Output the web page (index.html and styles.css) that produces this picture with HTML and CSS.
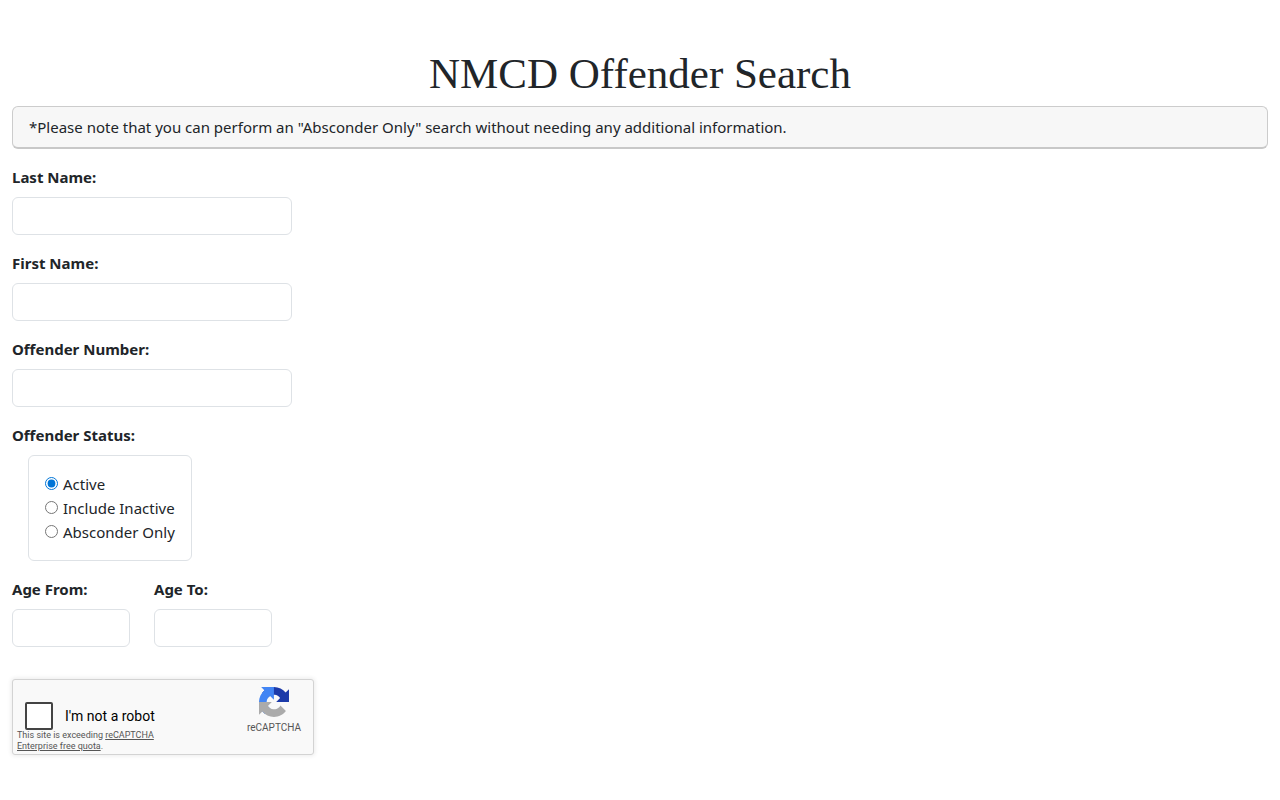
FILE: index.html
```html
<!DOCTYPE html>
<html lang="en">
<head>
    <meta charset="UTF-8">
    <meta name="viewport" content="width=device-width, initial-scale=1.0">
    <title>NMCD Offender Search</title>
    <link rel="stylesheet" href="styles.css">
</head>
<body>
    <main class="container">
        <h1>NMCD Offender Search</h1>
        <div class="note">*Please note that you can perform an "Absconder Only" search without needing any additional information.</div>
        <form>
            <div class="field">
                <label class="title" for="lastName">Last Name:</label>
                <input class="text" type="text" id="lastName" name="lastName">
            </div>
            <div class="field">
                <label class="title" for="firstName">First Name:</label>
                <input class="text" type="text" id="firstName" name="firstName">
            </div>
            <div class="field">
                <label class="title" for="offenderNumber">Offender Number:</label>
                <input class="text" type="text" id="offenderNumber" name="offenderNumber">
            </div>
            <div class="field" role="radiogroup" aria-labelledby="statusTitle">
                <span class="title" id="statusTitle">Offender Status:</span>
                <div class="status">
                    <label><input type="radio" name="status" value="active" checked>Active</label>
                    <label><input type="radio" name="status" value="inactive">Include Inactive</label>
                    <label><input type="radio" name="status" value="absconder">Absconder Only</label>
                </div>
            </div>
            <div class="ages">
                <div class="field">
                    <label class="title" for="ageFrom">Age From:</label>
                    <input class="text age" type="text" id="ageFrom" name="ageFrom">
                </div>
                <div class="field">
                    <label class="title" for="ageTo">Age To:</label>
                    <input class="text age" type="text" id="ageTo" name="ageTo">
                </div>
            </div>
            <div class="captcha">
                <div class="captcha-main">
                    <label class="robot"><input type="checkbox" name="robot">I'm not a robot</label>
                    <p class="quota">This site is exceeding <a href="#">reCAPTCHA Enterprise free quota</a>.</p>
                </div>
                <div class="captcha-brand">
                    <svg width="30" height="30" viewBox="0 0 64 64" aria-hidden="true">
                        <path fill="#1c3aa9" d="M64 31.955l-.033-1.37V4.687l-7.16 7.16C50.948 4.674 42.033.093 32.05.093c-10.4 0-19.622 4.96-25.458 12.64l11.736 11.86a15.55 15.55 0 0 1 4.754-5.334c2.05-1.6 4.952-2.906 8.968-2.906.485 0 .86.057 1.135.163 4.976.393 9.288 3.14 11.828 7.124l-8.307 8.307L64 31.953"/>
                        <path fill="#4285f4" d="M31.862.094l-1.37.033H4.594l7.16 7.16C4.58 13.147 0 22.06 0 32.046c0 10.4 4.96 19.622 12.64 25.458L24.5 45.768a15.55 15.55 0 0 1-5.334-4.754c-1.6-2.05-2.906-4.952-2.906-8.968 0-.485.057-.86.163-1.135.393-4.976 3.14-9.288 7.124-11.828l8.307 8.307L31.86.095"/>
                        <path fill="#ababab" d="M.001 32.045l.033 1.37v25.898l7.16-7.16c5.86 7.173 14.774 11.754 24.76 11.754 10.4 0 19.622-4.96 25.458-12.64l-11.736-11.86a15.55 15.55 0 0 1-4.754 5.334c-2.05 1.6-4.952 2.906-8.968 2.906-.485 0-.86-.057-1.135-.163-4.976-.393-9.288-3.14-11.828-7.124l8.307-8.307c-10.522.04-22.4.066-27.295-.005"/>
                    </svg>
                    <span>reCAPTCHA</span>
                </div>
            </div>
        </form>
    </main>
</body>
</html>
```
FILE: styles.css
```css
* {
    box-sizing: border-box;
}
body {
    margin: 0;
    font-family: "Segoe UI", "Noto Sans", sans-serif;
    font-size: 15px;
    line-height: 24px;
    color: #212529;
    background-color: #fff;
}
.container {
    padding: 50px 12px 24px;
}
h1 {
    margin: 0 0 8px;
    font-family: Georgia, "Liberation Serif", serif;
    font-size: 43px;
    font-weight: normal;
    line-height: 48px;
    text-align: center;
}
.note {
    margin-bottom: 16px;
    padding: 8px 16px;
    border: 1px solid #ccc;
    border-bottom: 2px solid #c8c8c8;
    border-radius: 6px;
    background-color: #f7f7f7;
}
.field {
    margin-bottom: 16px;
}
.title {
    display: block;
    margin-bottom: 8px;
    font-weight: bold;
}
.text {
    display: block;
    width: 280px;
    height: 38px;
    padding: 6px 12px;
    border: 1px solid #dee2e6;
    border-radius: 6px;
    font: inherit;
    color: inherit;
}
.age {
    width: 118px;
}
.ages {
    display: flex;
    gap: 24px;
}
.status {
    display: flex;
    flex-direction: column;
    width: 164px;
    margin-left: 16px;
    padding: 16px;
    border: 1px solid #dee2e6;
    border-radius: 6px;
    white-space: nowrap;
}
.status label {
    display: flex;
    align-items: center;
    gap: 5px;
}
.status input {
    width: 13px;
    height: 13px;
    margin: 0 0 2px;
    accent-color: #0075d7;
}
.captcha {
    display: flex;
    justify-content: space-between;
    width: 302px;
    height: 76px;
    margin-top: 16px;
    border: 1px solid #d3d3d3;
    border-radius: 3px;
    background-color: #f9f9f9;
    box-shadow: 0 0 4px 1px rgba(0,0,0,0.08);
    font-family: Roboto, sans-serif;
}
.captcha-main {
    width: 160px;
    padding: 22px 0 0 4px;
}
.robot {
    display: flex;
    align-items: center;
    gap: 12px;
    padding-left: 8px;
    font-size: 14px;
    line-height: 17px;
    color: #000;
}
.robot input {
    appearance: none;
    width: 28px;
    height: 28px;
    margin: 0;
    border: 2px solid #444;
    border-radius: 2px;
    background-color: #fff;
}
.robot input:checked {
    background-color: #4285f4;
}
.quota {
    margin: 0;
    font-size: 9px;
    line-height: 11px;
    color: #555;
}
.quota a {
    color: inherit;
}
.captcha-brand {
    display: flex;
    flex-direction: column;
    align-items: center;
    width: 78px;
    padding-top: 7px;
    font-size: 10px;
    line-height: 22px;
    color: #555;
}
```
